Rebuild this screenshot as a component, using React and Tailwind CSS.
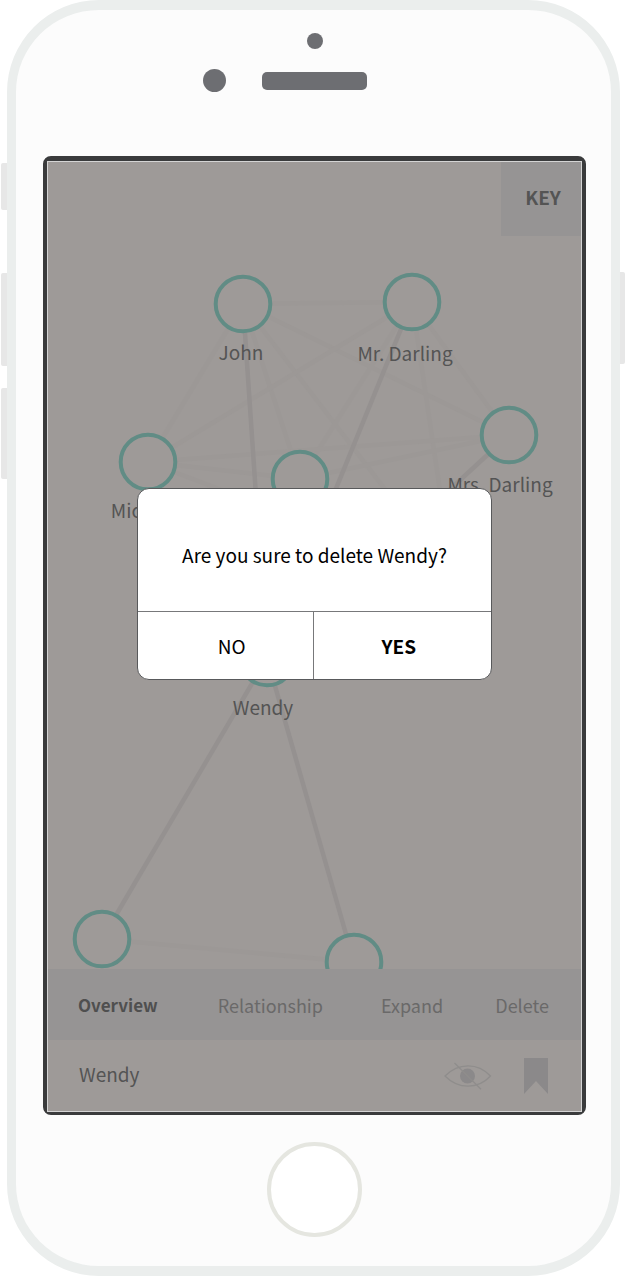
const people = [
  { name: "John", cx: 195, cy: 142, label: "left-[193px] top-[178px]" },
  { name: "Mr. Darling", cx: 364, cy: 140, label: "left-[357px] top-[179px]" },
  { name: "Mrs. Darling", cx: 461, cy: 273, label: "left-[452px] top-[310px]" },
  { name: "Michael", cx: 100, cy: 300, label: "left-[97px] top-[336px]" },
  { name: "Wendy", cx: 219, cy: 496, label: "left-[215px] top-[533px]" },
];

const unnamed = [
  { cx: 252, cy: 317 },
  { cx: 54, cy: 777 },
  { cx: 306, cy: 800 },
];

const strongTies = [
  [195, 142, 219, 496],
  [364, 140, 219, 496],
  [461, 273, 219, 496],
  [54, 777, 219, 496],
  [306, 800, 219, 496],
];

const weakTies = [
  [195, 142, 364, 140],
  [195, 142, 461, 273],
  [195, 142, 100, 300],
  [195, 142, 252, 317],
  [195, 142, 405, 416],
  [364, 140, 461, 273],
  [364, 140, 100, 300],
  [364, 140, 252, 317],
  [364, 140, 405, 416],
  [100, 300, 461, 273],
  [100, 300, 252, 317],
  [100, 300, 405, 416],
  [252, 317, 461, 273],
  [54, 777, 306, 800],
];

function Ties({ ties, color }) {
  return ties.map(([x1, y1, x2, y2]) => (
    <line key={`${x1}-${y1}-${x2}-${y2}`} x1={x1} y1={y1} x2={x2} y2={y2} stroke={color} strokeWidth="4.5" />
  ));
}

function Graph() {
  return (
    <div className="relative h-[807px] overflow-hidden text-[19px] leading-6 text-[#545454]">
      <svg className="absolute inset-0 size-full" aria-hidden="true">
        <Ties ties={weakTies} color="#9c9896" />
        <Ties ties={strongTies} color="#959190" />
        {[...people, ...unnamed].map(({ cx, cy }) => (
          <circle key={`${cx}-${cy}`} cx={cx} cy={cy} r="27.3" fill="#9e9a98" stroke="#618c85" strokeWidth="4" />
        ))}
      </svg>
      {people.map(({ name, label }) => (
        <span key={name} className={`absolute -translate-x-1/2 whitespace-nowrap ${label}`}>
          {name}
        </span>
      ))}
      <button className="absolute right-0 top-0 h-[74px] w-20 bg-[#969494] pb-1 pl-1 font-bold">KEY</button>
    </div>
  );
}

function Dialog() {
  return (
    <div className="absolute inset-x-0 top-[326px] flex justify-center">
      <div
        role="alertdialog"
        aria-labelledby="confirm-text"
        className="w-2/3 overflow-hidden rounded-xl border border-[#58595b] bg-white text-center text-[19px] leading-6 text-black"
      >
        <p id="confirm-text" className="pt-[54px] pb-11">
          Are you sure to delete Wendy?
        </p>
        <div className="grid grid-cols-2 divide-x divide-[#77787a] border-t border-[#77787a]">
          <button className="h-[67px] pl-3">NO</button>
          <button className="h-[67px] pr-2 font-bold">YES</button>
        </div>
      </div>
    </div>
  );
}

function HiddenEye() {
  return (
    <svg className="h-7 w-12" viewBox="0 0 48 28" fill="none" stroke="#8f8d8c" strokeWidth="1.3" aria-hidden="true">
      <path d="M1 14Q11 3.8 24 3.8T46.500 14Q37 24.200 24 24.200T1 14Z" />
      <circle cx="23.500" cy="14" r="7.500" fill="#8b898a" stroke="none" />
      <path d="M10.500 1L37 27.300" />
    </svg>
  );
}

function SideKey({ className }) {
  return <span className={`absolute w-[6px] bg-[#e7e7e7] ${className}`} />;
}

export default function App() {
  return (
    <main className="relative pl-[7px] pr-[5px] font-['Noto_Sans_CJK_SC',sans-serif]">
      <SideKey className="left-px top-[163px] h-[47px] rounded-l-xs" />
      <SideKey className="left-px top-[273px] h-[93px] rounded-l-xs" />
      <SideKey className="left-px top-[388px] h-[91px] rounded-l-xs" />
      <SideKey className="right-0 top-[272px] h-[92px] rounded-r-xs" />

      <div className="relative rounded-[92px] border-x-[9px] border-y-[10px] border-[#ebeeed] bg-[#fcfcfc] pl-[27px] pr-[25px]">
        <header className="flex h-[146px] flex-col items-center pt-[23px]">
          <span className="size-4 rounded-full bg-[#6d6e72]" />
          <div className="mt-5 mr-[59px] flex items-center gap-9">
            <span className="size-[23px] rounded-full bg-[#6d6e72]" />
            <span className="h-[18px] w-[105px] rounded-[5px] bg-[#6d6e72]" />
          </div>
        </header>

        <div className="rounded-lg border-x-4 border-b-[3px] border-t-[5px] border-[#3a3b3c] bg-[#3a3b3c]">
          <section className="relative border border-[#d4d4d4] bg-[#9e9a98]">
            <Graph />
            <nav className="flex h-[71px] items-center bg-[#969494] pl-[30px] pr-8 text-[18px] leading-6 text-[#6a6969]">
              <button className="text-[17px] font-bold text-[#4f4f4f]">Overview</button>
              <button className="ml-[60px]">Relationship</button>
              <button className="ml-[58px]">Expand</button>
              <button className="ml-auto">Delete</button>
            </nav>
            <footer className="flex h-[71px] items-center pl-[31px] pr-[33px] text-[19px] leading-6 text-[#545454]">
              <span className="grow pb-1">Wendy</span>
              <button aria-label="Hide person" className="mr-8">
                <HiddenEye />
              </button>
              <button aria-label="Bookmark person">
                <svg className="h-9 w-6" viewBox="0 0 24 36" aria-hidden="true">
                  <path d="M0 0H24V36L12 23L0 36Z" fill="#8b898a" />
                </svg>
              </button>
            </footer>
            <Dialog />
          </section>
        </div>

        <div className="flex h-[151px] items-start justify-center pt-[27px]">
          <button aria-label="Home" className="size-[95px] rounded-full border-4 border-[#e5e6e0] bg-white" />
        </div>
      </div>
    </main>
  );
}
